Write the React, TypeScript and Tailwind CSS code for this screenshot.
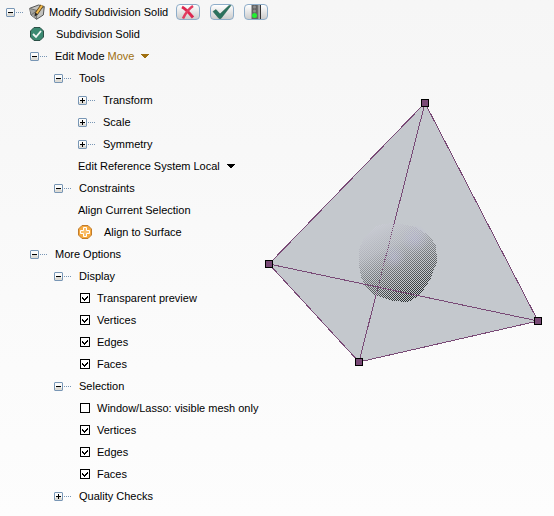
import React, { useState } from "react";

type CheckProps = { label: string; initial?: boolean };
type ToggleProps = { label: string; open?: boolean; onToggle?: () => void };

function Toggle({ label, open = true, onToggle }: ToggleProps) {
  return (
    <button type="button" aria-label={label} aria-expanded={open} onClick={onToggle} className="flex h-[22px] w-5 shrink-0 items-center">
      <svg width="20" height="9" viewBox="0 0 20 9" shapeRendering="crispEdges">
        <path d="M1 1h7v7H1z" fill="#dedcd6" />
        <path d="M1 1h7v3H1zM1 4h1v2H1zM7 4h1v2H7z" fill="#fbfbfa" />
        <path d="M1 0h7v1H1zM1 8h7v1H1zM0 1h1v7H0zM8 1h1v7H8z" fill="#7896b5" />
        <path d="M0 0h1v1H0zM8 0h1v1H8zM0 8h1v1H0zM8 8h1v1H8z" fill="#b9c8d8" />
        <path d="M2 4h5v1H2z" fill="#000" />
        {!open && <path d="M4 2h1v5H4z" fill="#000" />}
        <path d="M10 4.5h7" stroke="#7896b5" strokeDasharray="1 1" />
      </svg>
    </button>
  );
}

function Node({ label, initial = true, children }: { label: string; initial?: boolean; children?: React.ReactNode }) {
  const [open, setOpen] = useState(initial);
  return (
    <li>
      <div className="flex h-[22px] items-center gap-[5px]">
        <Toggle label={label} open={open} onToggle={() => setOpen(!open)} />
        <span>{label}</span>
      </div>
      {open && children && <ul className="pl-6">{children}</ul>}
    </li>
  );
}

function Check({ label, initial = true }: CheckProps) {
  const [on, setOn] = useState(initial);
  return (
    <li className="h-[22px]">
      <label className="flex h-full w-fit items-center gap-[7px] pl-0.5">
        <span className="grid">
          <input
            type="checkbox"
            checked={on}
            onChange={() => setOn(!on)}
            className="col-start-1 row-start-1 size-[10px] appearance-none border border-black bg-white"
          />
          {on && (
            <svg className="pointer-events-none col-start-1 row-start-1" width="10" height="10" viewBox="0 0 10 10" shapeRendering="crispEdges">
              <path d="M2 4h1v1h1v1h1v-1h1v-1h1v-1h1v2h-1v1h-1v1h-1v1h-1v-1h-1v-1h-1z" />
            </svg>
          )}
        </span>
        {label}
      </label>
    </li>
  );
}

function ToolButton({ label, children }: { label: string; children: React.ReactNode }) {
  return (
    <button
      type="button"
      aria-label={label}
      className="flex h-4 w-6 items-center justify-center rounded-[4px] border border-[#8eadc9] bg-linear-to-b from-white to-[#cdcdcd]"
    >
      {children}
    </button>
  );
}

function SolidIcon() {
  return (
    <svg width="16" height="16" viewBox="0 0 16 16">
      <path d="M.7 4.300 9.500 1l5.800 1.500-1 8.500-6.800 4.300L2 11z" fill="#c2c2be" stroke="#555" />
      <path d="M1 4.500l7 2L7.500 15 2.200 11z" fill="#a3a39f" />
      <path d="M1 4.500l7 2 7-3.500M8 6.500 7.500 15M2 11l5.500-4" fill="none" stroke="#70706d" />
      <path d="M13 1.500 7.500 9.500" stroke="#604314" strokeWidth="3.400" />
      <path d="M13 1.500 7.500 9.500" stroke="#f4bd4e" strokeWidth="2" />
      <path d="M5.500 12.500l.5-4 3 2z" fill="#292521" />
    </svg>
  );
}

const hull = "M95 153 99 143 109 131 118 127 131 126 151 130 166 139 172 149 173 165 166 183 156 198 144 205 128 204 111 198 101 189 97 180 95 168z";

function Viewport() {
  const vertices = [[161, 6], [5, 167], [95, 265], [274, 224]];
  return (
    <svg className="h-auto w-full" viewBox="0 0 290 271" role="img" aria-label="Subdivision solid preview">
      <defs>
        <linearGradient id="shade" x1="0.25" y1="0" x2="0.7" y2="1">
          <stop offset="0" stopColor="#cdced8" />
          <stop offset="0.3" stopColor="#aeb0b8" />
          <stop offset="0.55" stopColor="#74777a" />
          <stop offset="0.8" stopColor="#434748" />
          <stop offset="1" stopColor="#202628" />
        </linearGradient>
        <radialGradient id="glow">
          <stop offset="0" stopColor="#b4aee0" stopOpacity="0.5" />
          <stop offset="1" stopColor="#b4aee0" stopOpacity="0" />
        </radialGradient>
        <pattern id="mesh" width="2" height="2" patternUnits="userSpaceOnUse">
          <path d="M0 0h1v1H0zM1 1h1v1H1z" fill="#c4c8cd" />
        </pattern>
      </defs>
      <path d="M161 6 274 224 95 265 5 167z" fill="#c4c8cd" />
      <g shapeRendering="crispEdges">
        <path d={hull} fill="url(#shade)" />
        <circle cx="151" cy="142" r="14" fill="url(#glow)" />
        <circle cx="130" cy="160" r="12" fill="url(#glow)" />
        <path d={hull} fill="url(#mesh)" />
      </g>
      <g fill="none" stroke="#794a76" shapeRendering="crispEdges">
        <path d="M161 6 274 224 95 265 5 167z" />
        <path d="M5 167 274 224M161 6 130 127M112 198 95 265" />
        <path d="M130 127 112 198" strokeDasharray="1 1" />
      </g>
      <g fill="#794a76" stroke="#000" shapeRendering="crispEdges">
        {vertices.map(([x, y]) => (
          <rect key={`${x}-${y}`} x={x - 3.5} y={y - 3.5} width="7" height="7" />
        ))}
      </g>
    </svg>
  );
}

function Choice({ id, label, value, tint }: { id: string; label: string; value: string; tint: string }) {
  return (
    <span className="flex items-center gap-[3px]">
      <label htmlFor={id}>{label}</label>
      <span className={`grid items-center ${tint}`}>
        <select id={id} className="col-start-1 row-start-1 w-[41px] appearance-none">
          <option>{value}</option>
        </select>
        <svg className="pointer-events-none col-start-1 row-start-1 justify-self-end" width="8" height="4" viewBox="0 0 8 4" shapeRendering="crispEdges">
          <path d="M0 0h8v1H0zM1 1h6v1H1zM2 2h4v1H2zM3 3h2v1H3z" fill="currentColor" />
        </svg>
      </span>
    </span>
  );
}

export default function App() {
  return (
    <main className="min-h-screen bg-linear-to-b from-[#f6f6f6] to-[#fdfdfd] pt-px font-['Liberation_Sans',Arial,sans-serif] text-[11px] leading-[22px] text-black">
      <header className="flex h-[22px] items-center pl-1.5">
        <Toggle label="Modify Subdivision Solid" />
        <span className="flex items-center gap-1 pl-[3px]">
          <SolidIcon />
          <h1>Modify Subdivision Solid</h1>
        </span>
        <div className="flex gap-[10px] pl-2">
          <ToolButton label="Cancel">
            <svg width="16" height="14" viewBox="0 0 16 14">
              <path d="M2 2Q6 4 13 12.500" stroke="#dc2850" strokeWidth="3" fill="none" />
              <path d="M13 1Q7 5 3 13.500" stroke="#e23c60" strokeWidth="2.500" fill="none" />
            </svg>
          </ToolButton>
          <ToolButton label="Accept">
            <svg width="20" height="14" viewBox="0 0 20 14">
              <path d="M1 6.500 4 4.500 8 9 17 .5h2L9 13.500H7z" fill="#2b725d" stroke="#1d5947" strokeWidth="0.5" />
            </svg>
          </ToolButton>
          <ToolButton label="Live preview">
            <svg width="12" height="14" viewBox="0 0 12 14">
              <path d="M1.500 0h6v14h-6z" fill="#626262" />
              <path d="M7.500 0h1v14h-1zM10 0h1v14h-1z" fill="#333" />
              <path d="M8.500 0H10v14H8.500z" fill="#aaa" />
              <circle cx="4.500" cy="2" r="1.500" fill="#8d8d8d" />
              <circle cx="4.500" cy="6" r="1.500" fill="#8d8d8d" />
              <circle cx="4.500" cy="10.500" r="2.500" fill="#22ee32" />
            </svg>
          </ToolButton>
        </div>
      </header>
      <div className="flex items-start">
        <ul className="w-[264px] shrink-0 pl-[30px]">
          <li className="flex h-[22px] items-center gap-3">
            <svg width="14" height="14" viewBox="0 0 14 14">
              <path d="M4 .5h6L13.500 4v6L10 13.500H4L.5 10V4z" fill="#3a8971" stroke="#2b4f45" />
              <path d="M3 7l3 3 5-6" fill="none" stroke="#f2f7f5" strokeWidth="1.800" />
            </svg>
            Subdivision Solid
          </li>
          <li>
            <div className="flex h-[22px] items-center gap-[5px]">
              <Toggle label="Edit Mode" />
              <Choice id="mode" label="Edit Mode" value="Move" tint="text-[#a07010]" />
            </div>
            <ul className="pl-6">
              <Node label="Tools">
                <Node label="Transform" initial={false} />
                <Node label="Scale" initial={false} />
                <Node label="Symmetry" initial={false} />
                <li className="flex h-[22px] items-center">
                  <Choice id="system" label="Edit Reference System" value="Local" tint="text-black" />
                </li>
              </Node>
              <Node label="Constraints">
                <li className="h-[22px]">Align Current Selection</li>
                <li className="flex h-[22px] items-center gap-3">
                  <svg width="14" height="14" viewBox="0 0 14 14">
                    <path d="M4 .5h6L13.500 4v6L10 13.500H4L.5 10V4z" fill="#f6a83c" stroke="#c07c2e" />
                    <path d="M5.500 2.500h3v3h3v3h-3v3h-3v-3h-3v-3h3z" fill="#f9be6b" stroke="#fff" />
                  </svg>
                  Align to Surface
                </li>
              </Node>
            </ul>
          </li>
          <Node label="More Options">
            <Node label="Display">
              <Check label="Transparent preview" />
              <Check label="Vertices" />
              <Check label="Edges" />
              <Check label="Faces" />
            </Node>
            <Node label="Selection">
              <Check label="Window/Lasso: visible mesh only" initial={false} />
              <Check label="Vertices" />
              <Check label="Edges" />
              <Check label="Faces" />
            </Node>
            <Node label="Quality Checks" initial={false} />
          </Node>
        </ul>
        <section className="min-w-0 flex-1 pt-[74px]">
          <Viewport />
        </section>
      </div>
    </main>
  );
}
